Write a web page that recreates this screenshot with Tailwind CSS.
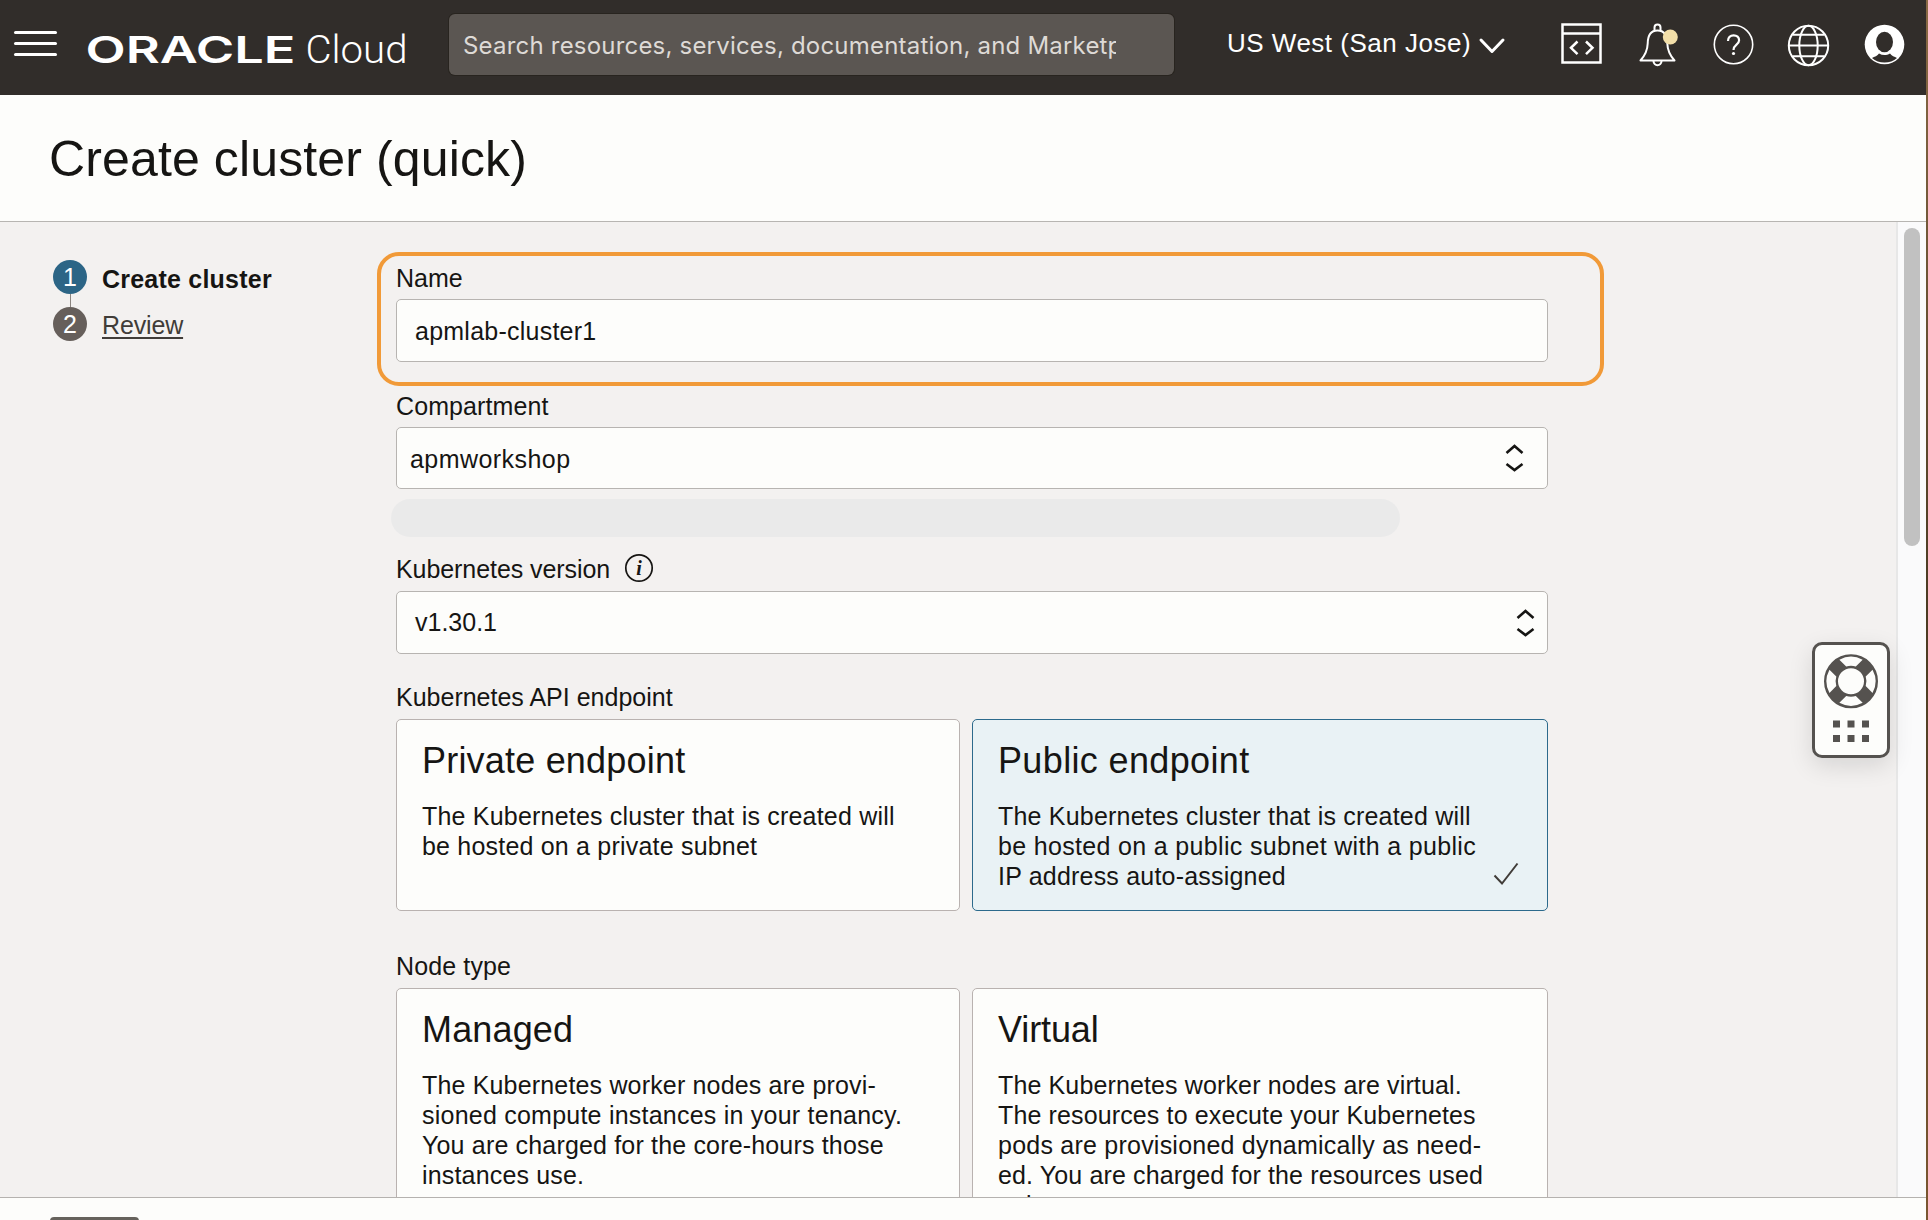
<!DOCTYPE html>
<html lang="en">
<head>
<meta charset="utf-8">
<title>Create cluster (quick)</title>
<script src="https://cdn.jsdelivr.net/npm/@tailwindcss/browser@4"></script>
</head>
<body class="w-[1928px] h-[1220px] overflow-hidden bg-gradient-to-b from-[#8a6a45] via-[#4a3a22] to-[#7a5630] font-['Liberation_Sans',Arial,sans-serif] text-[#161513] text-[25px] leading-[30px]">
<div class="relative flex flex-col w-[1926px] h-[1220px] bg-[#fdfdfb] overflow-hidden">

  <header class="flex items-start h-[95px] shrink-0 bg-[#312d2a] text-white">
    <div class="flex flex-col gap-2 w-[43px] ml-[14px] mt-[31px]">
      <span class="h-[3px] rounded-full bg-white"></span>
      <span class="h-[3px] rounded-full bg-white"></span>
      <span class="h-[3px] rounded-full bg-white"></span>
    </div>
    <svg class="ml-[28px] w-[330px] h-[95px] shrink-0" viewBox="0 0 330 95" fill="#fff">
      <text x="0.500" y="62.500" font-family="Inter, sans-serif" font-weight="600" font-size="37" textLength="210" lengthAdjust="spacingAndGlyphs">ORACLE</text>
      <text x="220.500" y="62.500" font-family="Roboto, sans-serif" font-weight="300" font-size="39" textLength="102" lengthAdjust="spacingAndGlyphs">Cloud</text>
    </svg>
    <div class="flex items-center w-[725px] h-[61px] ml-[34px] mt-[14px] pl-[14px] pt-[2px] rounded-md bg-[#5b5652] shadow-[0_0_0_1px_#28241f] shrink-0">
      <div class="w-[653px] overflow-hidden whitespace-nowrap font-['Inter',sans-serif] text-[24px] tracking-[0.2px] text-[#dedad6]">Search resources, services, documentation, and Marketplace</div>
    </div>
    <div class="flex items-center ml-[53px] mt-[28px] w-[280px] shrink-0">
      <span class="text-[26px] tracking-[0.5px] whitespace-nowrap">US West (San Jose)</span>
      <svg class="ml-[7px] mt-[6px] w-[28px] h-[18px] shrink-0" viewBox="0 0 28 18" fill="none" stroke="#fff" stroke-width="3" stroke-linecap="round" stroke-linejoin="round"><path d="M3 3l11 11.500L25 3"/></svg>
    </div>
    <svg class="ml-[53px] mt-[20px] w-[350px] h-[50px] shrink-0" viewBox="1560 20 350 50" fill="none" stroke="#fff" stroke-width="2">
      <path d="M1562.500 24.500h38v38h-38z" stroke-width="2.500"/>
      <path d="M1562 33.500h39" stroke-width="2.500"/>
      <path d="M1577.500 41.500l-6.500 6.300 6.500 6.300M1586 41.500l6.500 6.300-6.500 6.300" stroke-width="2.500"/>
      <path d="M1640.500 60.500c4.500-5 7-11 7.200-17 .1-7.500 2-13 9.800-13s9.700 5.500 9.800 13c.2 6 2.700 12 7.200 17z" stroke-linejoin="round"/>
      <path d="M1654.500 30v-2.500a2.900 2.900 0 0 1 6 0V30M1653.500 61c0 5.500 8 5.500 8 0"/>
      <circle cx="1670.300" cy="37" r="7.500" fill="#f3dfa9" stroke="none"/>
      <circle cx="1733.500" cy="44.500" r="19.200" stroke-width="1.600"/>
      <path d="M1728 41c0-3.500 2.300-5.700 5.600-5.700s5.500 2 5.500 5c0 4.500-5.600 4.200-5.600 9.700" stroke-width="2.200"/>
      <circle cx="1733.500" cy="53.500" r="1.600" fill="#fff" stroke="none"/>
      <circle cx="1808.500" cy="45.500" r="19.700"/>
      <ellipse cx="1808.500" cy="45.500" rx="9.200" ry="19.700"/>
      <path d="M1789 45.500h39M1792.500 34.800h32M1792.500 56.300h32"/>
      <circle cx="1884.500" cy="44.500" r="19.800" fill="#fff" stroke="none"/>
      <ellipse cx="1884.500" cy="42" rx="8.500" ry="10.300" fill="#312d2a" stroke="none"/>
      <path d="M1872 58c2.500-1.500 5.500-2 7-4.500 3.500 2 7.500 2 11 0 1.500 2.500 4.500 3 7 4.500-6.500 6-18.500 6-25 0z" fill="#312d2a" stroke="none"/>
    </svg>
  </header>

  <h1 class="flex items-center h-[127px] shrink-0 pl-[49px] pt-px border-b border-[#b7b5b2] text-[50px] tracking-[0.13px]">Create cluster (quick)</h1>

  <main class="relative flex h-[975px] shrink-0 bg-[#f3f1f0] overflow-hidden">
    <nav class="w-[396px] shrink-0 pt-[38px] pl-[53px]">
      <div class="flex items-start gap-[15px] h-[34px]">
        <span class="flex items-center justify-center size-[34px] rounded-full bg-[#2c6586] text-white">1</span>
        <span class="font-bold mt-[4px] tracking-[0.22px]">Create cluster</span>
      </div>
      <div class="w-px h-[13px] ml-[17px] bg-[#8b8580]"></div>
      <div class="flex items-start gap-[15px] h-[34px]">
        <span class="flex items-center justify-center size-[34px] rounded-full bg-[#665f5b] text-white">2</span>
        <span class="mt-[3px] text-[#403c38] tracking-[-0.15px] underline decoration-2 underline-offset-3">Review</span>
      </div>
    </nav>

    <form class="w-[1152px] shrink-0 flex flex-col pt-[41px]">
      <label class="h-9 shrink-0">Name</label>
      <div class="flex items-center h-[63px] shrink-0 pl-[18px] pt-px bg-[#fdfdfb] border border-[#b7b4b1] rounded-[5px] tracking-[0.24px]">apmlab-cluster1</div>

      <label class="h-9 mt-[29px] shrink-0 tracking-[0.1px]">Compartment</label>
      <div class="flex items-center justify-between h-[62px] shrink-0 pl-[13px] pr-[23px] bg-[#fdfdfb] border border-[#b7b4b1] rounded-[5px]">
        <span class="mt-[2px] tracking-[0.45px]">apmworkshop</span>
        <svg class="-mt-px w-[19px] h-[28px]" viewBox="0 0 19 28" fill="none" stroke="#161513" stroke-width="2.600"><path d="M1.500 9L9.500 2l8 7M1.500 20l8 6 8-6"/></svg>
      </div>
      <div class="w-[1009px] h-[38px] shrink-0 -ml-[5px] mt-[10px] rounded-full bg-[#eaeaea]"></div>

      <label class="flex h-9 mt-[18px] shrink-0 leading-[28px] tracking-[-0.07px]">Kubernetes version
        <svg class="ml-[14px] -mt-[2px] size-[30px]" viewBox="0 0 30 30"><circle cx="15" cy="15" r="13.200" fill="none" stroke="#161513" stroke-width="1.700"/><text x="15" y="21.500" text-anchor="middle" font-family="Liberation Serif, serif" font-style="italic" font-weight="700" font-size="20" fill="#161513">i</text></svg>
      </label>
      <div class="flex items-center justify-between h-[63px] shrink-0 pl-[18px] pr-[12px] bg-[#fdfdfb] border border-[#b7b4b1] rounded-[5px]">
        <span class="-mt-[2px]">v1.30.1</span>
        <svg class="w-[19px] h-[28px]" viewBox="0 0 19 28" fill="none" stroke="#161513" stroke-width="2.600"><path d="M1.500 9L9.500 2l8 7M1.500 20l8 6 8-6"/></svg>
      </div>

      <label class="h-9 mt-[29px] shrink-0 leading-[28px]">Kubernetes API endpoint</label>
      <div class="flex gap-3 h-[192px] shrink-0">
        <div class="w-[564px] pt-[19px] pl-[25px] bg-[#fdfdfb] border border-[#b9b2b0] rounded-[5px]">
          <h2 class="text-[36px] leading-[44px] tracking-[0.2px]">Private endpoint</h2>
          <p class="mt-[18px] tracking-[0.2px]">The Kubernetes cluster that is created will<br>be hosted on a private subnet</p>
        </div>
        <div class="relative w-[576px] pt-[19px] pl-[25px] bg-[#e9f2f5] border border-[#2c6a8c] rounded-[5px]">
          <h2 class="text-[36px] leading-[44px] tracking-[0.36px]">Public endpoint</h2>
          <p class="mt-[18px] tracking-[0.2px]">The Kubernetes cluster that is created will<br><span class="tracking-[0.33px]">be hosted on a public subnet with a public</span><br>IP address auto-assigned</p>
          <svg class="absolute right-[28px] bottom-[24px] w-[26px] h-[24px]" viewBox="0 0 26 24" fill="none" stroke="#403c38" stroke-width="2"><path d="M1.500 13.500l7.500 8L24.500 1.500"/></svg>
        </div>
      </div>

      <label class="h-9 mt-[41px] shrink-0 leading-[28px] tracking-[0.12px]">Node type</label>
      <div class="flex gap-3 h-[260px] shrink-0">
        <div class="w-[564px] pt-[19px] pl-[25px] bg-[#fdfdfb] border border-[#b9b2b0] rounded-[5px]">
          <h2 class="text-[36px] leading-[44px] tracking-[0.15px]">Managed</h2>
          <p class="mt-[18px] tracking-[0.17px]">The Kubernetes worker nodes are provi-<br><span class="tracking-[0.23px]">sioned compute instances in your tenancy.</span><br>You are charged for the core-hours those<br>instances use.</p>
        </div>
        <div class="w-[576px] pt-[19px] pl-[25px] bg-[#fdfdfb] border border-[#b9b2b0] rounded-[5px]">
          <h2 class="text-[36px] leading-[44px] tracking-[-0.1px]">Virtual</h2>
          <p class="mt-[18px] tracking-[0.13px]">The Kubernetes worker nodes are virtual.<br>The resources to execute your Kubernetes<br><span class="tracking-[0.23px]">pods are provisioned dynamically as need-</span><br>ed. You are charged for the resources used<br>only.</p>
        </div>
      </div>
    </form>

    <div class="w-[30px] shrink-0 ml-auto h-full bg-[#fafafb] border-l-2 border-[#e7e7e7] pt-[6px] pl-[6px]">
      <div class="w-4 h-[318px] rounded-full bg-[#c1c1c1]"></div>
    </div>

    <!-- highlight frame round the Name field -->
    <div class="absolute left-[377px] top-[30px] w-[1227px] h-[134px] border-4 border-[#f19a38] rounded-[22px]"></div>

    <!-- floating help widget -->
    <div class="absolute left-[1812px] top-[420px] w-[78px] h-[116px] rounded-[10px] bg-[#fdfdfb] border-[3px] border-[#55524f] shadow-[0_8px_24px_rgba(0,0,0,0.12)]">
      <svg class="w-[72px] h-[110px]" viewBox="1815 645 72 110">
        <g transform="translate(1851 681.300)">
          <circle r="20" fill="none" stroke="#55524f" stroke-width="14"/>
          <g fill="#fdfdfb">
            <path d="M-11.650-21.550A24.500 24.500 0 0 1 11.650-21.550L4.800-14.700A15.500 15.500 0 0 0-4.800-14.700z"/>
            <path transform="rotate(90)" d="M-11.650-21.550A24.500 24.500 0 0 1 11.650-21.550L4.800-14.700A15.500 15.500 0 0 0-4.800-14.700z"/>
            <path transform="rotate(180)" d="M-11.650-21.550A24.500 24.500 0 0 1 11.650-21.550L4.800-14.700A15.500 15.500 0 0 0-4.800-14.700z"/>
            <path transform="rotate(270)" d="M-11.650-21.550A24.500 24.500 0 0 1 11.650-21.550L4.800-14.700A15.500 15.500 0 0 0-4.800-14.700z"/>
          </g>
        </g>
        <path fill="#55524f" d="M1833 720.500h7v7h-7zM1847.500 720.500h7v7h-7zM1862 720.500h7v7h-7zM1833 735h7v7h-7zM1847.500 735h7v7h-7zM1862 735h7v7h-7z"/>
      </svg>
    </div>
  </main>

  <footer class="h-[23px] shrink-0 border-t border-[#b5b2af] pl-[50px] pt-[19px]">
    <div class="w-[89px] h-[48px] rounded-[4px] bg-[#66625c]"></div>
  </footer>
</div>
</body>
</html>
